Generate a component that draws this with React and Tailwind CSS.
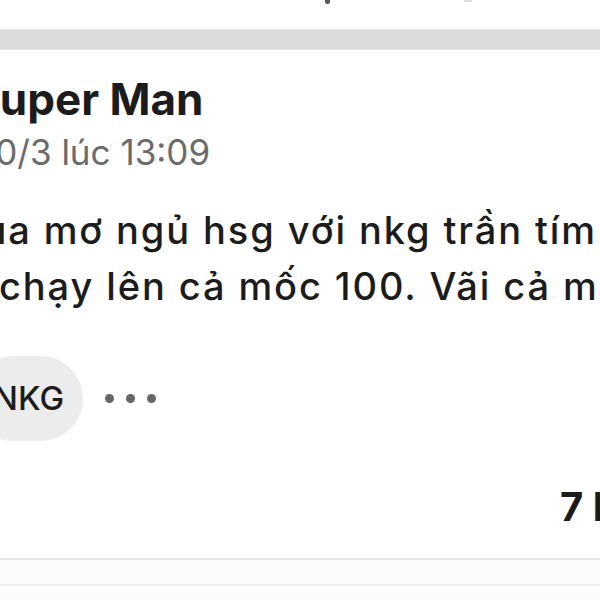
export default function App() {
  const font = { fontFamily: "Inter, 'Noto Sans', sans-serif" };
  return (
    <div className="w-[600px] h-[600px] overflow-hidden bg-white relative" style={font}>
      <div className="h-[29px] flex items-start">
        <div className="ml-[325px] w-[5px] h-[4px] rounded-b-full bg-[#555]" />
        <div className="ml-[134px] w-[8px] h-[2px] bg-[#ddd]" />
      </div>
      <div className="h-[21px] bg-[#dcdcdc] border-y border-[#e6e6e6]" />
      <div className="pt-[24px] whitespace-nowrap">
        <div className="-ml-[29px] text-[44px] leading-[50px] font-bold text-[#1c1c1c]">Super Man</div>
        <div className="mt-[7px] -ml-[19px] text-[35px] leading-[42px] text-[#6b6b6b]">10/3 lúc 13:09</div>
        <div className="mt-[29px] text-[38px] leading-[56px] font-medium tracking-[1.9px] text-[#1c1c1c]">
          <div className="-ml-[42px]">qua mơ ngủ hsg với nkg trần tím cả đêm</div>
          <div className="-ml-[1px]">chạy lên cả mốc 100. Vãi cả mấy con</div>
        </div>
        <div className="mt-[42px] flex items-center">
          <div className="-ml-[30px] h-[85px] pl-[30px] pr-[19px] rounded-full bg-[#ececec] flex items-center text-[33px] font-medium text-[#1c1c1c]">
            <span className="-ml-[28px]">#NKG</span>
          </div>
          <div className="ml-[22px] flex gap-[12px]">
            <div className="w-[9px] h-[9px] rounded-full bg-[#666]" />
            <div className="w-[9px] h-[9px] rounded-full bg-[#666]" />
            <div className="w-[9px] h-[9px] rounded-full bg-[#666]" />
          </div>
        </div>
        <div className="mt-[44px] flex">
          <div className="ml-[560px] text-[40px] leading-[44px] font-bold text-[#1c1c1c]">7 bình luận</div>
        </div>
      </div>
      <div className="mt-[29px] h-[2px] bg-[#e6e6e6]" />
      <div className="h-[24px] bg-[#fbfbfb]" />
      <div className="h-[2px] bg-[#efefef]" />
      <div className="h-[40px] bg-[#fcfcfc]" />
    </div>
  );
}
